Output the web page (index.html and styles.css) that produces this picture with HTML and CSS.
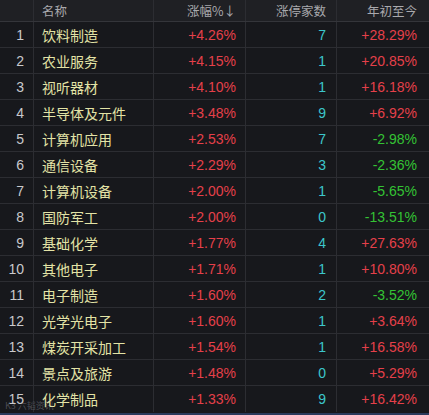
FILE: index.html
```html
<!DOCTYPE html>
<html lang="zh">
<head>
<meta charset="utf-8">
<link rel="stylesheet" href="styles.css">
</head>
<body>
<div class="board">
  <div class="row head">
    <div class="c idx"></div>
    <div class="c name">名称</div>
    <div class="c chg">涨幅%↓</div>
    <div class="c cnt">涨停家数</div>
    <div class="c ytd">年初至今</div>
  </div>
  <div class="row"><div class="c idx">1</div><div class="c name">饮料制造</div><div class="c chg up">+4.26%</div><div class="c cnt">7</div><div class="c ytd up">+28.29%</div></div>
  <div class="row"><div class="c idx">2</div><div class="c name">农业服务</div><div class="c chg up">+4.15%</div><div class="c cnt">1</div><div class="c ytd up">+20.85%</div></div>
  <div class="row"><div class="c idx">3</div><div class="c name">视听器材</div><div class="c chg up">+4.10%</div><div class="c cnt">1</div><div class="c ytd up">+16.18%</div></div>
  <div class="row"><div class="c idx">4</div><div class="c name">半导体及元件</div><div class="c chg up">+3.48%</div><div class="c cnt">9</div><div class="c ytd up">+6.92%</div></div>
  <div class="row"><div class="c idx">5</div><div class="c name">计算机应用</div><div class="c chg up">+2.53%</div><div class="c cnt">7</div><div class="c ytd down">-2.98%</div></div>
  <div class="row"><div class="c idx">6</div><div class="c name">通信设备</div><div class="c chg up">+2.29%</div><div class="c cnt">3</div><div class="c ytd down">-2.36%</div></div>
  <div class="row"><div class="c idx">7</div><div class="c name">计算机设备</div><div class="c chg up">+2.00%</div><div class="c cnt">1</div><div class="c ytd down">-5.65%</div></div>
  <div class="row"><div class="c idx">8</div><div class="c name">国防军工</div><div class="c chg up">+2.00%</div><div class="c cnt">0</div><div class="c ytd down">-13.51%</div></div>
  <div class="row"><div class="c idx">9</div><div class="c name">基础化学</div><div class="c chg up">+1.77%</div><div class="c cnt">4</div><div class="c ytd up">+27.63%</div></div>
  <div class="row"><div class="c idx">10</div><div class="c name">其他电子</div><div class="c chg up">+1.71%</div><div class="c cnt">1</div><div class="c ytd up">+10.80%</div></div>
  <div class="row"><div class="c idx">11</div><div class="c name">电子制造</div><div class="c chg up">+1.60%</div><div class="c cnt">2</div><div class="c ytd down">-3.52%</div></div>
  <div class="row"><div class="c idx">12</div><div class="c name">光学光电子</div><div class="c chg up">+1.60%</div><div class="c cnt">1</div><div class="c ytd up">+3.64%</div></div>
  <div class="row"><div class="c idx">13</div><div class="c name">煤炭开采加工</div><div class="c chg up">+1.54%</div><div class="c cnt">1</div><div class="c ytd up">+16.58%</div></div>
  <div class="row"><div class="c idx">14</div><div class="c name">景点及旅游</div><div class="c chg up">+1.48%</div><div class="c cnt">0</div><div class="c ytd up">+5.29%</div></div>
  <div class="row last"><div class="c idx">15</div><div class="c name">化学制品</div><div class="c chg up">+1.33%</div><div class="c cnt">9</div><div class="c ytd up">+16.42%</div></div>
  <div class="mark">K3 六韬资讯</div>
</div>
</body>
</html>
```

FILE: styles.css
```css
html, body {
  margin: 0;
  padding: 0;
  background: #17181c;
}
.board {
  position: relative;
  width: 429px;
  height: 415px;
  overflow: hidden;
  background: #17181c;
  border-bottom: 2px solid #2a3a5c;
  box-sizing: border-box;
  font-family: "Liberation Sans", "Noto Sans CJK SC", sans-serif;
}
.row {
  display: flex;
  height: 26px;
  border-bottom: 1px solid #2c2d32;
  box-sizing: border-box;
  font-size: 14px;
}
.row.head {
  height: 22px;
  background: #1f2024;
  font-size: 12.5px;
  color: #a9a9ad;
  font-family: "Noto Sans CJK SC", sans-serif;
  border-bottom-color: #34353a;
}
.row.last {
  border-bottom: none;
}
.c {
  display: flex;
  align-items: center;
  box-sizing: border-box;
  border-right: 1px solid #2c2d32;
  white-space: nowrap;
}
.idx {
  width: 34px;
  justify-content: flex-end;
  padding-right: 9px;
  color: #c9c9cc;
}
.name {
  width: 120px;
  padding-left: 8px;
  color: #e3e3a6;
  font-family: "Noto Sans CJK SC", sans-serif;
}
.head .name {
  color: #a9a9ad;
}
.chg {
  width: 92px;
  justify-content: flex-end;
  padding-right: 9px;
}
.cnt {
  width: 91px;
  justify-content: flex-end;
  padding-right: 10px;
  color: #3cc6cb;
}
.head .cnt {
  color: #a9a9ad;
}
.ytd {
  flex: 1;
  justify-content: flex-end;
  padding-right: 12px;
  border-right: none;
}
.up {
  color: #e5404a;
}
.down {
  color: #34c234;
}
.mark {
  position: absolute;
  left: 5px;
  bottom: 2px;
  font-size: 9px;
  line-height: 10px;
  color: rgba(200, 200, 210, 0.3);
  font-family: "Noto Sans CJK SC", sans-serif;
}
```
